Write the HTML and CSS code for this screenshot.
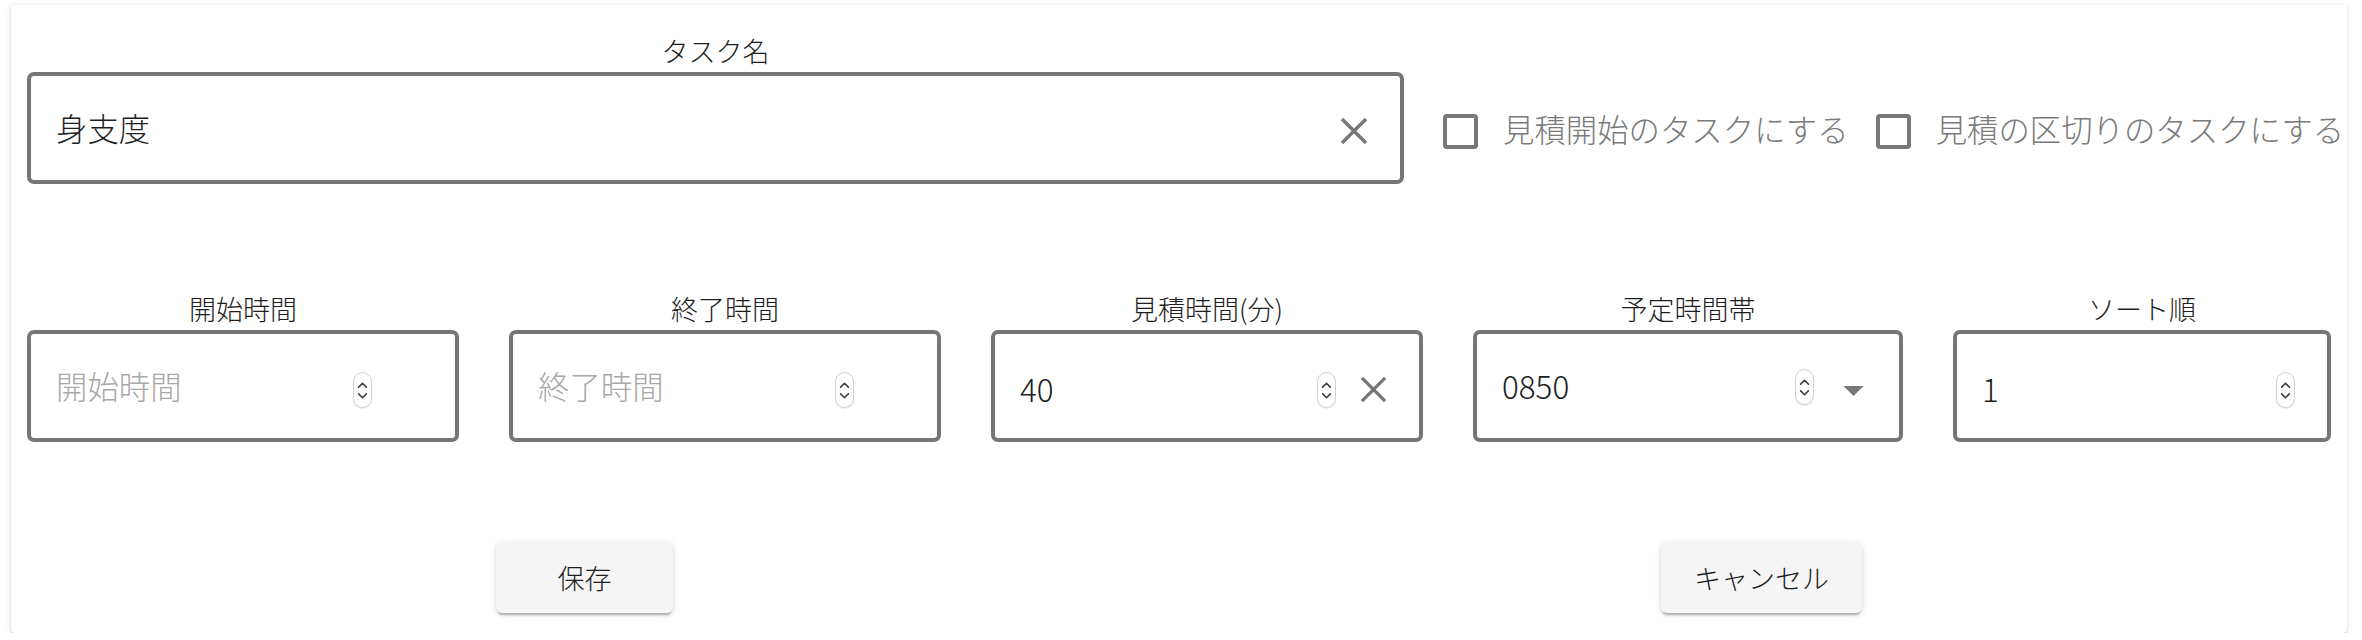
FILE: index.html
```html
<!DOCTYPE html>
<html lang="ja">
<head>
<meta charset="utf-8">
<title>タスク編集</title>
<link rel="stylesheet" href="styles.css">
</head>
<body>
<div class="card">
  <div class="row-top">
    <div class="group group--name">
      <div class="label">タスク名</div>
      <div class="field">
        <input class="field-input" type="text" value="身支度">
        <span class="slot"><svg class="icon-x" viewBox="0 0 28 28"><path d="M2 2 L26 26 M26 2 L2 26"/></svg></span>
      </div>
    </div>
    <div class="checks">
      <label class="check"><span class="check-box"></span><span class="check-text">見積開始のタスクにする</span></label>
      <label class="check"><span class="check-box"></span><span class="check-text">見積の区切りのタスクにする</span></label>
    </div>
  </div>

  <div class="row-fields">
    <div class="group group--w432">
      <div class="label">開始時間</div>
      <div class="field">
        <input class="field-input" type="text" placeholder="開始時間">
        <span class="spin"><svg viewBox="0 0 12 7"><path d="M1.5 6 L6 1.5 L10.5 6"/></svg><svg viewBox="0 0 12 7"><path d="M1.5 1 L6 5.5 L10.5 1"/></svg></span>
        <span class="slot slot--hidden"></span>
      </div>
    </div>
    <div class="group group--w432">
      <div class="label">終了時間</div>
      <div class="field">
        <input class="field-input" type="text" placeholder="終了時間">
        <span class="spin"><svg viewBox="0 0 12 7"><path d="M1.5 6 L6 1.5 L10.5 6"/></svg><svg viewBox="0 0 12 7"><path d="M1.5 1 L6 5.5 L10.5 1"/></svg></span>
        <span class="slot slot--hidden"></span>
      </div>
    </div>
    <div class="group group--w432">
      <div class="label">見積時間(分)</div>
      <div class="field">
        <input class="field-input field-input--num" type="text" value="40">
        <span class="spin"><svg viewBox="0 0 12 7"><path d="M1.5 6 L6 1.5 L10.5 6"/></svg><svg viewBox="0 0 12 7"><path d="M1.5 1 L6 5.5 L10.5 1"/></svg></span>
        <span class="slot"><svg class="icon-x icon-x--small" viewBox="0 0 28 28"><path d="M2 2 L26 26 M26 2 L2 26"/></svg></span>
      </div>
    </div>
    <div class="group group--w430">
      <div class="label">予定時間帯</div>
      <div class="field">
        <input class="field-input" type="text" value="0850">
        <span class="spin spin--high"><svg viewBox="0 0 12 7"><path d="M1.5 6 L6 1.5 L10.5 6"/></svg><svg viewBox="0 0 12 7"><path d="M1.5 1 L6 5.5 L10.5 1"/></svg></span>
        <span class="slot slot--wide"><svg class="icon-tri" viewBox="0 0 20 10"><path d="M0 0 L20 0 L10 10 Z"/></svg></span>
      </div>
    </div>
    <div class="group group--w378">
      <div class="label">ソート順</div>
      <div class="field">
        <input class="field-input field-input--num" type="text" value="1">
        <span class="spin"><svg viewBox="0 0 12 7"><path d="M1.5 6 L6 1.5 L10.5 6"/></svg><svg viewBox="0 0 12 7"><path d="M1.5 1 L6 5.5 L10.5 1"/></svg></span>
      </div>
    </div>
  </div>

  <div class="row-buttons">
    <button class="btn" type="button">保存</button>
    <button class="btn" type="button">キャンセル</button>
  </div>
</div>
</body>
</html>
```

FILE: styles.css
```css
html, body {
  margin: 0;
  padding: 0;
  background: #ffffff;
}

body {
  font-family: "Noto Sans CJK JP", "Noto Sans", sans-serif;
  font-weight: 300;
  color: #222222;
}

.card {
  margin: 5px 0 0 11px;
  width: 2336px;
  box-sizing: border-box;
  padding: 33px 0 20px 16px;
  background: #ffffff;
  border-radius: 4px;
  box-shadow: 0 2px 2px -1px rgba(0, 0, 0, 0.2), 0 1px 2px 0 rgba(0, 0, 0, 0.12), 0 1px 6px 0 rgba(0, 0, 0, 0.1);
}

.row-top {
  display: flex;
  align-items: flex-end;
}

.group {
  display: flex;
  flex-direction: column;
  flex-shrink: 0;
}

.group--name { width: 1377px; }
.group--w432 { width: 432px; }
.group--w430 { width: 430px; }
.group--w378 { width: 378px; }

.label {
  font-size: 27px;
  line-height: 26px;
  height: 26px;
  margin-bottom: 8px;
  text-align: center;
  color: #1e1e1e;
  white-space: nowrap;
}

.field {
  height: 112px;
  box-sizing: border-box;
  border: 4px solid #767676;
  border-radius: 7px;
  display: flex;
  align-items: center;
  padding: 0 32px 0 25px;
  background: #ffffff;
}

.field-input {
  flex: 1;
  min-width: 0;
  border: none;
  outline: none;
  background: transparent;
  padding: 0;
  margin: 0;
  font-family: inherit;
  font-weight: 300;
  font-size: 31.4px;
  line-height: 40px;
  height: 40px;
  color: #1e1e1e;
}

.field-input--num {
  margin-top: 6px;
}

.field-input::placeholder {
  color: #a8a8a8;
  opacity: 1;
}

.spin {
  flex-shrink: 0;
  width: 19px;
  height: 36px;
  box-sizing: border-box;
  border: 1px solid #d2d2d2;
  border-radius: 10px;
  background: #ffffff;
  box-shadow: 0 1px 1px rgba(0, 0, 0, 0.08);
  display: flex;
  flex-direction: column;
  align-items: center;
  justify-content: center;
  gap: 5px;
  margin-top: 8px;
}

.spin--high {
  margin-top: 2px;
}

.spin svg {
  width: 11px;
  height: 6px;
  fill: none;
  stroke: #3c3c3c;
  stroke-width: 1.8;
  stroke-linecap: round;
  stroke-linejoin: round;
}

.slot {
  flex-shrink: 0;
  width: 28px;
  height: 28px;
  margin-left: 23px;
  margin-top: 6px;
  display: flex;
  align-items: center;
  justify-content: center;
}

.slot--wide {
  margin-left: 25px;
  margin-top: 10px;
}

.slot--hidden {
  visibility: hidden;
}

.icon-x {
  width: 28px;
  height: 28px;
  fill: none;
  stroke: #777777;
  stroke-width: 3.4;
}

.icon-x--small {
  width: 27px;
  height: 27px;
}

.icon-tri {
  width: 21px;
  height: 10px;
  fill: #777777;
}

.checks {
  display: flex;
  align-items: center;
  height: 112px;
  margin-left: 39px;
  padding-top: 6px;
  box-sizing: border-box;
  gap: 27px;
  flex-shrink: 0;
}

.check {
  display: flex;
  align-items: center;
  gap: 25px;
  white-space: nowrap;
}

.check-box {
  width: 35px;
  height: 35px;
  box-sizing: border-box;
  border: 4px solid #777777;
  border-radius: 4px;
  flex-shrink: 0;
}

.check-text {
  font-size: 31.4px;
  line-height: 40px;
  color: #7a7a7a;
  margin-top: -4px;
}

.row-fields {
  display: flex;
  gap: 50px;
  margin-top: 112px;
}

.row-buttons {
  display: flex;
  gap: 988px;
  margin-top: 100px;
  padding-left: 469px;
}

.btn {
  height: 71px;
  min-width: 177px;
  padding: 0 33px;
  box-sizing: border-box;
  border: none;
  border-radius: 6px;
  background: #f5f5f5;
  font-family: inherit;
  font-weight: 300;
  font-size: 27px;
  color: #1e1e1e;
  box-shadow: 0 4px 2px -2px rgba(0, 0, 0, 0.22), 0 2px 4px 0 rgba(0, 0, 0, 0.12), 0 1px 8px 0 rgba(0, 0, 0, 0.08);
}
```
